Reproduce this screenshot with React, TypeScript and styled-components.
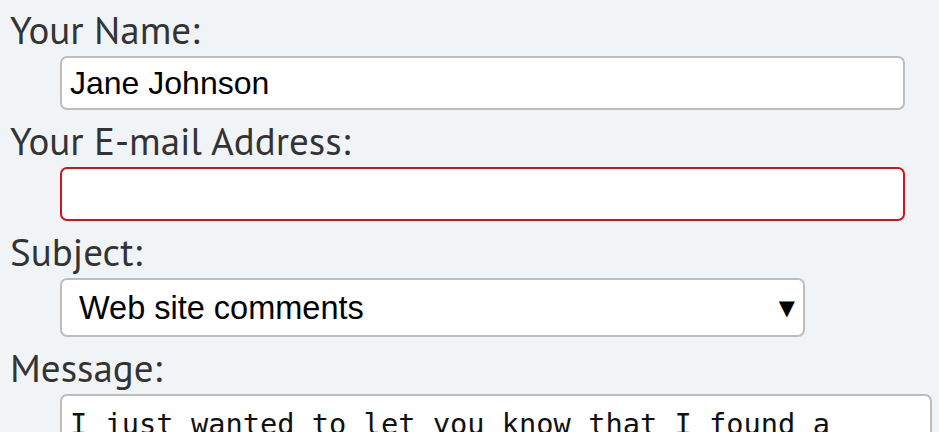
import React from "react";
import styled, { createGlobalStyle } from "styled-components";

const Global = createGlobalStyle`
  html, body { margin: 0; padding: 0; background: #ffffff; }
  #root { width: 939px; }
`;

const Page = styled.form`
  box-sizing: border-box;
  height: 432px;
  overflow: hidden;
  background: #f1f4f7;
  padding: 3px 0 0 10px;
  display: flex;
  flex-direction: column;
`;

const Field = styled.div`
  display: flex;
  flex-direction: column;
  margin-bottom: 4px;
`;

const Label = styled.label`
  font-family: "PT Sans", "Open Sans", "Noto Sans", sans-serif;
  font-size: 39px;
  line-height: 53px;
  color: #333333;
`;

const Control = styled.div<{ $width: number }>`
  margin-left: 50px;
  width: ${(p) => p.$width}px;
  position: relative;
`;

const TextInput = styled.input<{ $invalid?: boolean }>`
  box-sizing: border-box;
  display: block;
  width: 100%;
  height: 54px;
  border: 2px solid ${(p) => (p.$invalid ? "#d0121b" : "#bdbdbd")};
  border-radius: 7px;
  background: #ffffff;
  padding: 0 8px;
  font-family: "Liberation Sans", Arial, sans-serif;
  font-size: 32px;
  color: #000000;
  outline: none;
`;

const Select = styled.select`
  box-sizing: border-box;
  display: block;
  width: 100%;
  height: 59px;
  border: 2px solid #bdbdbd;
  border-radius: 7px;
  background: #ffffff;
  padding: 0 40px 0 17px;
  font-family: "Liberation Sans", Arial, sans-serif;
  font-size: 32.5px;
  color: #000000;
  appearance: none;
  outline: none;
`;

const Arrow = styled.span`
  position: absolute;
  right: 10px;
  top: 50%;
  transform: translateY(-50%);
  font-family: "DejaVu Sans", sans-serif;
  font-size: 21px;
  color: #000;
  pointer-events: none;
`;

const TextArea = styled.textarea`
  box-sizing: border-box;
  display: block;
  width: 100%;
  height: 140px;
  border: 2px solid #bdbdbd;
  border-radius: 7px;
  background: #ffffff;
  padding: 10px 8px 5px;
  font-family: "DejaVu Sans Mono", monospace;
  font-size: 28.7px;
  line-height: 36px;
  color: #111111;
  resize: none;
  outline: none;
`;

export default function App() {
  return (
    <>
      <Global />
      <Page>
        <Field>
          <Label htmlFor="name">Your Name:</Label>
          <Control $width={845}>
            <TextInput id="name" defaultValue="Jane Johnson" />
          </Control>
        </Field>
        <Field>
          <Label htmlFor="email">Your E-mail Address:</Label>
          <Control $width={845}>
            <TextInput id="email" $invalid defaultValue="" />
          </Control>
        </Field>
        <Field>
          <Label htmlFor="subject">Subject:</Label>
          <Control $width={745}>
            <Select id="subject" defaultValue="Web site comments">
              <option>Web site comments</option>
            </Select>
            <Arrow>▼</Arrow>
          </Control>
        </Field>
        <Field>
          <Label htmlFor="message">Message:</Label>
          <Control $width={872}>
            <TextArea
              id="message"
              defaultValue="I just wanted to let you know that I found a"
            />
          </Control>
        </Field>
      </Page>
    </>
  );
}
